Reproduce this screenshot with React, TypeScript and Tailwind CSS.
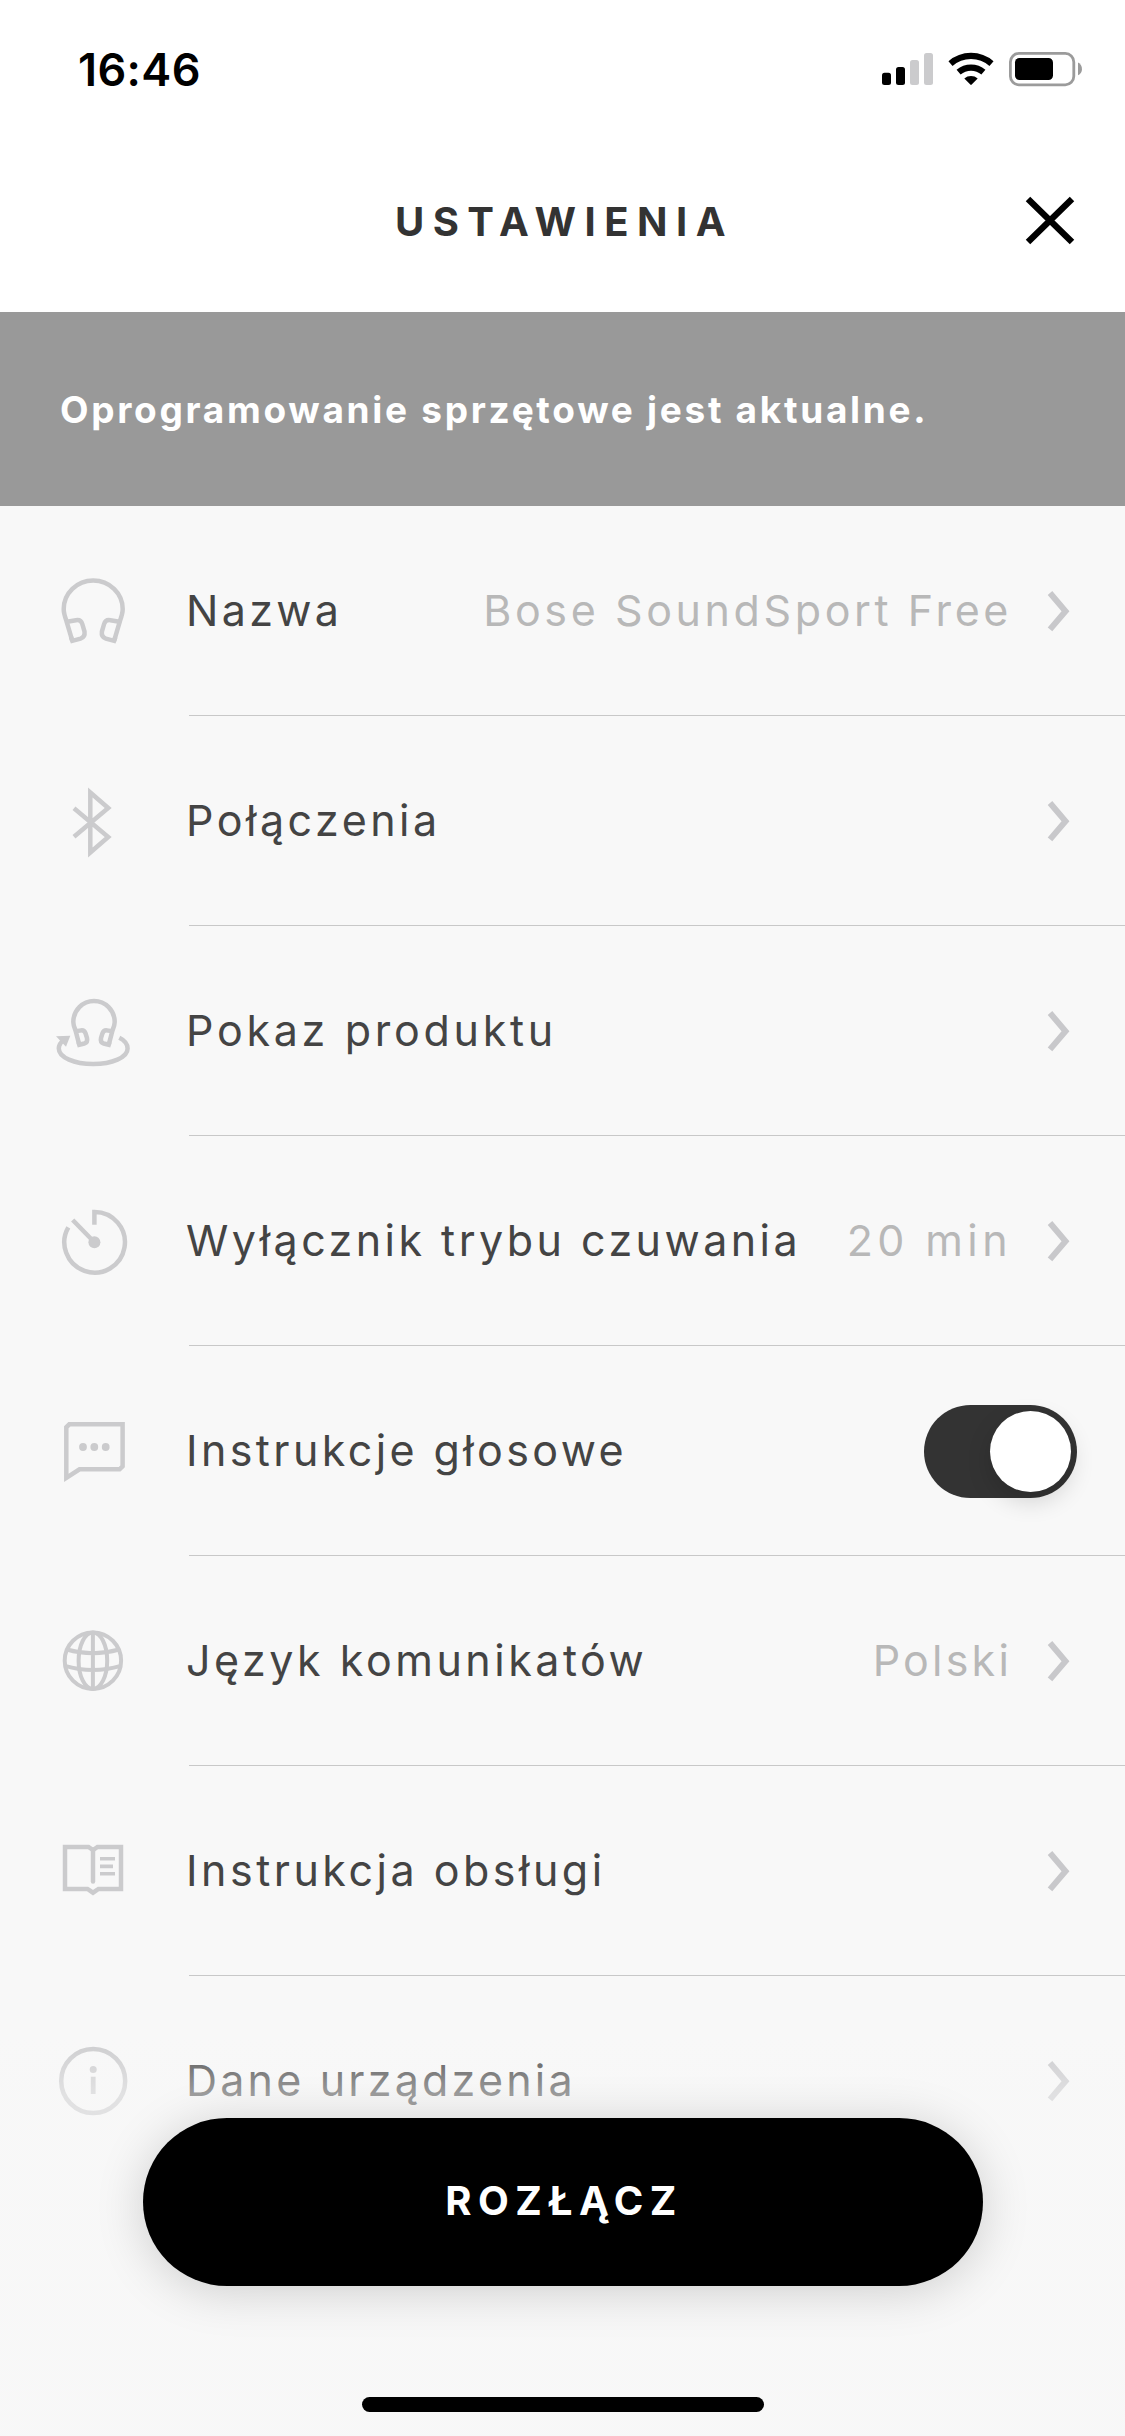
import type { ReactNode } from "react";

type Row = {
  label: string;
  tracking: string;
  icon: ReactNode;
  value?: string;
  valueTracking?: string;
  toggle?: boolean;
};

function Icon({ children }: { children: ReactNode }) {
  return (
    <svg
      width="90"
      height="91"
      viewBox="0 0 90 91"
      fill="none"
      stroke="#cbcbcd"
      strokeWidth="4.5"
      className="shrink-0"
    >
      {children}
    </svg>
  );
}

const HeadphonesIcon = (
  <Icon>
    <path d="M24.3 75.8 L18.3 55.5 C16.5 50.5 15.7 47 15.7 44 A29.5 28.6 0 0 1 74.7 44 C74.7 47 73.9 50.5 72.1 55.5 L66.1 75.8" />
    <path d="M19 56.7 L28 55.2 Q33 54.4 34.3 59 L36.5 66.5 Q37.3 72 32.5 73.6 L24.3 75.8 L23 72" />
    <path d="M71.4 56.7 L62.4 55.2 Q57.4 54.4 56.1 59 L53.9 66.5 Q53.1 72 57.9 73.6 L66.1 75.8 L67.4 72" />
  </Icon>
);

const BluetoothIcon = (
  <Icon>
    <path d="M26 33.2 L60.2 62 L42.3 77.5 V17.5 L60.2 33 L26 61.8" />
  </Icon>
);

const TourIcon = (
  <Icon>
    <path d="M31.3 59.8 L27.5 45.5 C26 42 25.3 39.5 25.3 37 A20.7 21 0 0 1 66.7 37 C66.7 39.5 66 42 64.5 45.5 L60.7 59.8" />
    <path d="M28 46.2 L33 45.4 Q36.5 45 37.6 48.5 L39 53 Q40 57.4 36.3 58.5 L31.3 59.8 L30.5 57" />
    <path d="M64 46.2 L59 45.4 Q55.5 45 54.4 48.5 L53 53 Q52 57.4 55.7 58.5 L60.7 59.8 L61.5 57" />
    <path d="M71.3 52.7 C77 55.5 79.6 59.5 79.6 63.5 C79.6 72.5 64 79 45.2 79 S10.8 72.5 10.8 63.5 C10.8 60 13 56.8 17 54" />
    <path d="M8 51.3 L22.3 50.7 L18 61.7Z" fill="#cbcbcd" stroke="none" />
  </Icon>
);

const TimerIcon = (
  <Icon>
    <path d="M46.4 29.7 V17 A30.3 30.3 0 1 1 20.3 32.3" />
    <path d="M24.7 25 L46.4 47.3" />
    <circle cx="46.4" cy="47.3" r="6" fill="#cbcbcd" stroke="none" />
  </Icon>
);

const SpeechIcon = (
  <Icon>
    <path d="M18.3 72.8 V22.3 L21.3 19.3 H74.6 V61.3 L71.6 64.3 H31.5 Z" />
    <g fill="#cbcbcd" stroke="none">
      <circle cx="35" cy="42" r="3.9" />
      <circle cx="46.3" cy="42" r="3.9" />
      <circle cx="57.7" cy="42" r="3.9" />
    </g>
  </Icon>
);

const GlobeIcon = (
  <Icon>
    <g strokeWidth="4">
      <circle cx="44.9" cy="45.7" r="28.2" />
      <ellipse cx="44.9" cy="45.7" rx="14.3" ry="28.2" />
      <path d="M44.9 17.5 V73.9 M18.7 34.5 Q44.9 42 71.1 34.5 M17 50.8 Q44.9 59 72.8 50.8" />
    </g>
  </Icon>
);

const BookIcon = (
  <Icon>
    <g transform="translate(0 -3.3)">
      <path d="M17 25.3 H40.5 L45 28.3 L49.5 25.3 H73 V67.3 H50.5 L45 71 L39.5 67.3 H17 Z" />
      <path d="M45 28 V59.7" strokeLinecap="round" />
      <path d="M52 37 H67 M52 44.7 H65 M52 52 H67" strokeWidth="3.6" />
    </g>
  </Icon>
);

const InfoIcon = (
  <Icon>
    <circle cx="45.2" cy="46" r="32" />
    <circle cx="45.2" cy="34.4" r="3.5" fill="#cbcbcd" stroke="none" />
    <path d="M45.2 41.7 V59" strokeWidth="4.8" />
  </Icon>
);

const rows: Row[] = [
  { label: "Nazwa", tracking: "tracking-[3.3px]", icon: HeadphonesIcon, value: "Bose SoundSport Free", valueTracking: "tracking-[3.6px]" },
  { label: "Połączenia", tracking: "tracking-[3.5px]", icon: BluetoothIcon },
  { label: "Pokaz produktu", tracking: "tracking-[3.7px]", icon: TourIcon },
  { label: "Wyłącznik trybu czuwania", tracking: "tracking-[3.46px]", icon: TimerIcon, value: "20 min", valueTracking: "tracking-[4.4px]" },
  { label: "Instrukcje głosowe", tracking: "tracking-[3.4px]", icon: SpeechIcon, toggle: true },
  { label: "Język komunikatów", tracking: "tracking-[3.5px]", icon: GlobeIcon, value: "Polski", valueTracking: "tracking-[3.2px]" },
  { label: "Instrukcja obsługi", tracking: "tracking-[3.5px]", icon: BookIcon },
  { label: "Dane urządzenia", tracking: "tracking-[3.2px]", icon: InfoIcon },
];

function Chevron() {
  return (
    <svg width="30" height="45" viewBox="0 0 30 45" fill="none" stroke="#c8c8cb" strokeWidth="6" className="shrink-0">
      <path d="M6 5 L21.5 23.2 L6 41.4" />
    </svg>
  );
}

function Toggle() {
  return (
    <div className="mt-[2px] flex h-[93px] w-[153px] justify-end rounded-full bg-[#333333] p-[6px]">
      <div className="size-[81px] rounded-full bg-white shadow-[0_9px_24px_rgba(0,0,0,0.16)]" />
    </div>
  );
}

function StatusBar() {
  return (
    <div className="flex h-[137px] items-center justify-between pr-[42px] pl-[78px]">
      <span className="pt-[2px] text-[45px] leading-none font-semibold tracking-[0.4px] text-black">16:46</span>
      <svg width="202" height="36" viewBox="881 51 202 36">
        <rect x="882" y="72.7" width="9" height="12.3" rx="2.5" />
        <rect x="896" y="67" width="9" height="18" rx="2.5" />
        <rect x="910" y="60" width="9" height="25" rx="2.5" fill="#cbcbcd" />
        <rect x="924" y="53" width="9" height="32" rx="2.5" fill="#cbcbcd" />
        <g fill="none" stroke="#000" strokeWidth="6.2">
          <path d="M950.5 63.6 A31 31 0 0 1 991.5 63.6" />
          <path d="M958.6 72.2 A19 19 0 0 1 983.4 72.2" />
        </g>
        <path d="M964.3 78.4 A10.5 10.5 0 0 1 977.7 78.4 L971.7 84.6 Q971 85.2 970.3 84.6 Z" />
        <rect x="1010.4" y="53.4" width="63.4" height="31.4" rx="8.5" fill="none" stroke="#9b9b9b" strokeWidth="2.8" />
        <rect x="1015" y="58" width="38" height="22" rx="4.5" />
        <path d="M1078 62.5 C1083.3 64.8 1083.3 73 1078 75.3 Z" fill="#9b9b9b" />
      </svg>
    </div>
  );
}

export default function App() {
  return (
    <div className="relative flex h-[2436px] w-[1125px] flex-col overflow-hidden bg-[#f8f8f8] font-['Inter',sans-serif]">
      <header className="h-[312px] shrink-0 bg-white">
        <StatusBar />
        <div className="mt-[42px] grid h-[85px] grid-cols-[1fr_auto_1fr] items-center">
          <h1 className="col-start-2 pl-[4px] text-[40px] leading-none font-bold tracking-[8.5px] text-[#333333]">
            USTAWIENIA
          </h1>
          <button className="mr-[50px] mb-[1px] justify-self-end" aria-label="Zamknij">
            <svg width="50" height="50" viewBox="0 0 50 50" stroke="#000" strokeWidth="6.4">
              <path d="M3 3 L47 46 M47 3 L3 46" />
            </svg>
          </button>
        </div>
      </header>

      <div className="flex h-[194px] shrink-0 items-center bg-[#999999] pl-[60px] text-[37px] leading-none font-bold tracking-[2.7px] whitespace-nowrap text-white">
        Oprogramowanie sprzętowe jest aktualne.
      </div>

      <main className="flex flex-col">
        {rows.map((row) => (
          <div key={row.label} className="group flex h-[210px] shrink-0 pl-[48px]">
            <div className="flex h-[209px] items-center">{row.icon}</div>
            <div className="ml-[51px] flex flex-1 items-center justify-between border-b border-[#c8c8c8] pr-[48px] text-[43px] leading-none whitespace-nowrap group-last:border-transparent">
              <span className={`-ml-[3px] text-[#444444] ${row.tracking}`}>{row.label}</span>
              {row.toggle ? (
                <Toggle />
              ) : (
                <div className="flex items-center gap-[32px] pr-[3px]">
                  {row.value && <span className={`text-[#b8b8b8] ${row.valueTracking}`}>{row.value}</span>}
                  <Chevron />
                </div>
              )}
            </div>
          </div>
        ))}
      </main>

      <div className="absolute inset-x-0 bottom-0 flex h-[406px] flex-col items-center bg-[linear-gradient(to_bottom,rgba(247,247,247,0)_4px,rgba(247,247,247,0.5)_64px,rgba(247,247,247,0.5)_100%)] pt-[88px]">
        <button className="flex h-[168px] w-[840px] items-center justify-center rounded-full bg-black pb-[2px] pl-[3px] text-[40px] leading-none font-bold tracking-[6.5px] text-white shadow-[0_5px_48px_rgba(0,0,0,0.17)]">
          ROZŁĄCZ
        </button>
        <div className="mt-[111px] h-[15px] w-[402px] rounded-full bg-black" />
      </div>
    </div>
  );
}
